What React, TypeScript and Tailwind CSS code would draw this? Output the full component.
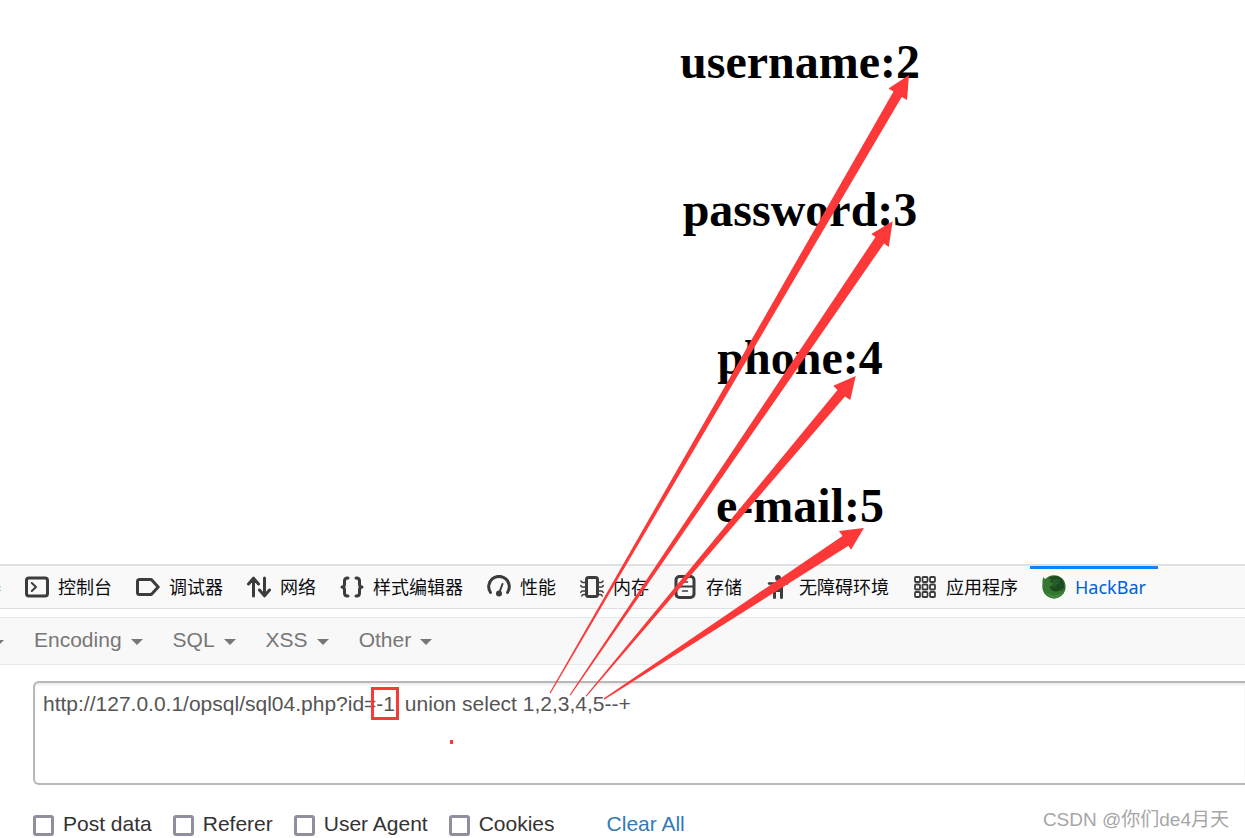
import type { ReactNode } from "react";

const RESULTS = ["username:2", "password:3", "phone:4", "e-mail:5"];
const MENUS = ["Encoding", "SQL", "XSS", "Other"];
const OPTIONS = ["Post data", "Referer", "User Agent", "Cookies"];

function Icon({ children }: { children: ReactNode }) {
  return (
    <svg viewBox="0 0 24 24" className="size-6 shrink-0" fill="none" stroke="#3c3c3d" strokeWidth="3" strokeLinecap="round" strokeLinejoin="round" aria-hidden="true">
      {children}
    </svg>
  );
}

function ConsoleIcon() {
  return (
    <Icon>
      <rect x="1.5" y="3" width="21" height="18" rx="2.5" />
      <path d="M6.800 8l4.200 4-4.200 4" strokeWidth="2" />
    </Icon>
  );
}

function DebuggerIcon() {
  return (
    <Icon>
      <path d="M3.500 4.500h11.800L22.200 12l-6.900 7.500H3.500Q1.500 19.500 1.500 17.500v-11Q1.500 4.500 3.500 4.500z" />
    </Icon>
  );
}

function NetworkIcon() {
  return (
    <Icon>
      <path d="M6.500 21V3.500M1.500 9l5-5.800 5 5.800M17.500 3v17.500M12.500 15l5 5.800 5-5.800" />
    </Icon>
  );
}

function StyleIcon() {
  return (
    <Icon>
      <path d="M8 3H7.500Q4.500 3 4.500 6v3q0 3-2.500 3 2.500 0 2.500 3v3q0 3 3 3H8M16 3h.5q3 0 3 3v3q0 3 2.500 3-2.500 0-2.500 3v3q0 3-3 3H16" />
    </Icon>
  );
}

function PerformanceIcon() {
  return (
    <Icon>
      <path d="M3.500 17.500A10.300 10.300 0 1 1 20.500 17.500" />
      <path d="M12.500 17l3-8" strokeWidth="2" />
      <circle cx="12" cy="18.500" r="3" fill="#3c3c3d" stroke="none" />
    </Icon>
  );
}

function MemoryIcon() {
  return (
    <Icon>
      <rect x="6.500" y="2.500" width="11" height="19" rx="2" />
      <path d="M5 7.500H3Q1.500 7.500 1 6M5 12H2.500Q1 12 .7 10.500M5 16H3q-2 0-2.200 1.500M5 19.500H4q-2 0-2.200 1.500M19 7.500h2q1.500 0 2-1.500M19 12h2.500q1.500 0 1.800-1.500M19 16h2q2 0 2.200 1.500M19 19.500h1q2 0 2.200 1.500" strokeWidth="1.500" />
    </Icon>
  );
}

function StorageIcon() {
  return (
    <Icon>
      <rect x="3" y="1.500" width="18" height="21" rx="3.500" />
      <path d="M4 11.500h16" strokeWidth="2" />
      <path d="M9.500 7h5M9.500 16h5" strokeWidth="1.500" />
    </Icon>
  );
}

function AccessibilityIcon() {
  return (
    <Icon>
      <circle cx="12" cy="3" r="3" fill="#3c3c3d" stroke="none" />
      <path d="M3 8.500h18" strokeWidth="2.500" />
      <path d="M7 8.500h10V22.500q0 1.500-1.500 1.500T14 22.500V17h-4v5.500q0 1.500-1.500 1.500T7 22.500z" fill="#3c3c3d" stroke="none" />
    </Icon>
  );
}

function ApplicationIcon() {
  return (
    <Icon>
      {[2, 9.5, 17].map((y) =>
        [2, 9.5, 17].map((x) => (
          <rect key={`${x}-${y}`} x={x} y={y} width="5" height="5" rx="1" strokeWidth="1.800" />
        )),
      )}
    </Icon>
  );
}

function HackBarIcon() {
  return (
    <svg viewBox="0 0 24 24" className="size-6 shrink-0" aria-hidden="true">
      <circle cx="12" cy="11.800" r="11.600" fill="#2f6f2d" />
      <path d="M6 4Q12-1 18 2.500q5 4 4 10-3 6-9 5-6-1-8-7z" fill="#1d4a1e" />
      <path d="M1 2l3 3Q6 3 9 4L8 7l4 1.500Q11 11 8 11.500q0 4 5 5 5 .5 7-3-1 6-7 7.500Q3 20 .8 13 0 7 1 2z" fill="#34782f" />
      <path d="M10 5q5-3 9 1l-3 .5 2 2.500-4 .5 1 2-4 1 1-3-2-2z" fill="#265c26" />
      <path d="M3 16q5 5 11 4 6-1 8-6-1 8-9.500 9.500Q6 23 3 16z" fill="#42873b" />
    </svg>
  );
}

const TABS = [
  { label: "控制台", icon: <ConsoleIcon /> },
  { label: "调试器", icon: <DebuggerIcon /> },
  { label: "网络", icon: <NetworkIcon /> },
  { label: "样式编辑器", icon: <StyleIcon /> },
  { label: "性能", icon: <PerformanceIcon /> },
  { label: "内存", icon: <MemoryIcon /> },
  { label: "存储", icon: <StorageIcon /> },
  { label: "无障碍环境", icon: <AccessibilityIcon /> },
  { label: "应用程序", icon: <ApplicationIcon /> },
];

function Caret() {
  return <span className="mt-1 border-x-6 border-t-6 border-x-transparent border-t-[#777777]" />;
}

function Arrows() {
  return (
    <svg width="1245" height="838" viewBox="0 0 1245 838" className="pointer-events-none absolute top-0 left-0" fill="#fc3838" aria-hidden="true">
      <path d="M549.500 693L893.500 91.500 888.500 88.500 909 75 907 100 901.700 97 550.500 693.500z" />
      <path d="M569.500 695L875.500 237 871.300 234 892.700 221.300 888.700 247 884 243.500 570.500 695.500z" />
      <path d="M585.500 696L837.500 390 833.300 385.700 855.700 376 850.300 400 845 396.500 586.500 696.500z" />
      <path d="M603.500 698.500L842.500 536 839 531 864 528 851 549.700 848.500 545.800 604.500 699.500z" />
    </svg>
  );
}

export default function App() {
  return (
    <div className="relative overflow-hidden bg-white font-['Liberation_Sans','Noto_Sans_CJK_SC',sans-serif]">
      <main className="flex flex-col gap-[93px] pt-[34px] pb-[31px] pl-[355px] text-center font-['Liberation_Serif',serif] text-black">
        {RESULTS.map((text) => (
          <h1 key={text} className="text-[48px] leading-[55px] font-bold">{text}</h1>
        ))}
      </main>

      <nav className="flex h-[45px] border-t-2 border-b border-[#e0e0e2] bg-[#f9f9fa] font-['Noto_Sans','Noto_Sans_CJK_SC',sans-serif] text-[18px] leading-6 whitespace-nowrap text-[#0c0c0d]">
        <button className="flex w-[13px] shrink-0 items-center justify-end overflow-hidden pr-3">查看器</button>
        {TABS.map((tab) => (
          <button key={tab.label} className="flex shrink-0 items-center gap-[9px] px-3">
            {tab.icon}
            {tab.label}
          </button>
        ))}
        <button className="flex shrink-0 items-center gap-[9px] border-t-3 border-[#0a84ff] px-3 pb-[3px] text-[#0060df]">
          <HackBarIcon />
          HackBar
        </button>
      </nav>

      <div className="mt-2 flex h-12 items-center gap-[30px] border-y border-[#e7e7e7] bg-[#f8f8f8] text-[21px] leading-[30px] text-[#777777]">
        <button aria-label="More" className="flex w-1 shrink-0 justify-end overflow-hidden"><Caret /></button>
        {MENUS.map((menu) => (
          <button key={menu} className="flex items-center gap-[9px] pb-[2px]">
            {menu}
            <Caret />
          </button>
        ))}
      </div>

      <section className="pt-4 pl-[33px] text-[21px] leading-[30px] text-[#333333]">
        <div className="relative">
          <textarea
            aria-label="URL"
            spellCheck={false}
            defaultValue="http://127.0.0.1/opsql/sql04.php?id=-1' union select 1,2,3,4,5--+"
            className="block h-[104px] w-full resize-none rounded-l-md border-2 border-r-0 border-[#b8b8b8] bg-white px-2 py-[6px] text-[#555555] shadow-[inset_0_2px_2px_#00000013] outline-none"
          />
          <span className="pointer-events-none absolute top-[6px] left-[338px] h-[33px] w-7 border-3 border-[#fc3838]" />
          <span className="pointer-events-none absolute top-[59px] left-[417px] h-1 w-[3px] bg-[#fc3838]" />
        </div>
        <div className="flex items-center gap-[21px] pt-6 whitespace-nowrap">
          {OPTIONS.map((option) => (
            <label key={option} className="flex items-center gap-[9px]">
              <input type="checkbox" className="mt-[3px] size-[21px] shrink-0 appearance-none rounded-[3px] border-3 border-[#8f8f9d] bg-white" />
              {option}
            </label>
          ))}
          <a href="#clear" className="ml-[31px] text-[#337ab7]">Clear All</a>
        </div>
      </section>

      <span className="pointer-events-none absolute right-4 bottom-1 text-[19px] leading-[30px] text-[#a6a6a6]">CSDN @你们de4月天</span>

      <Arrows />
    </div>
  );
}
